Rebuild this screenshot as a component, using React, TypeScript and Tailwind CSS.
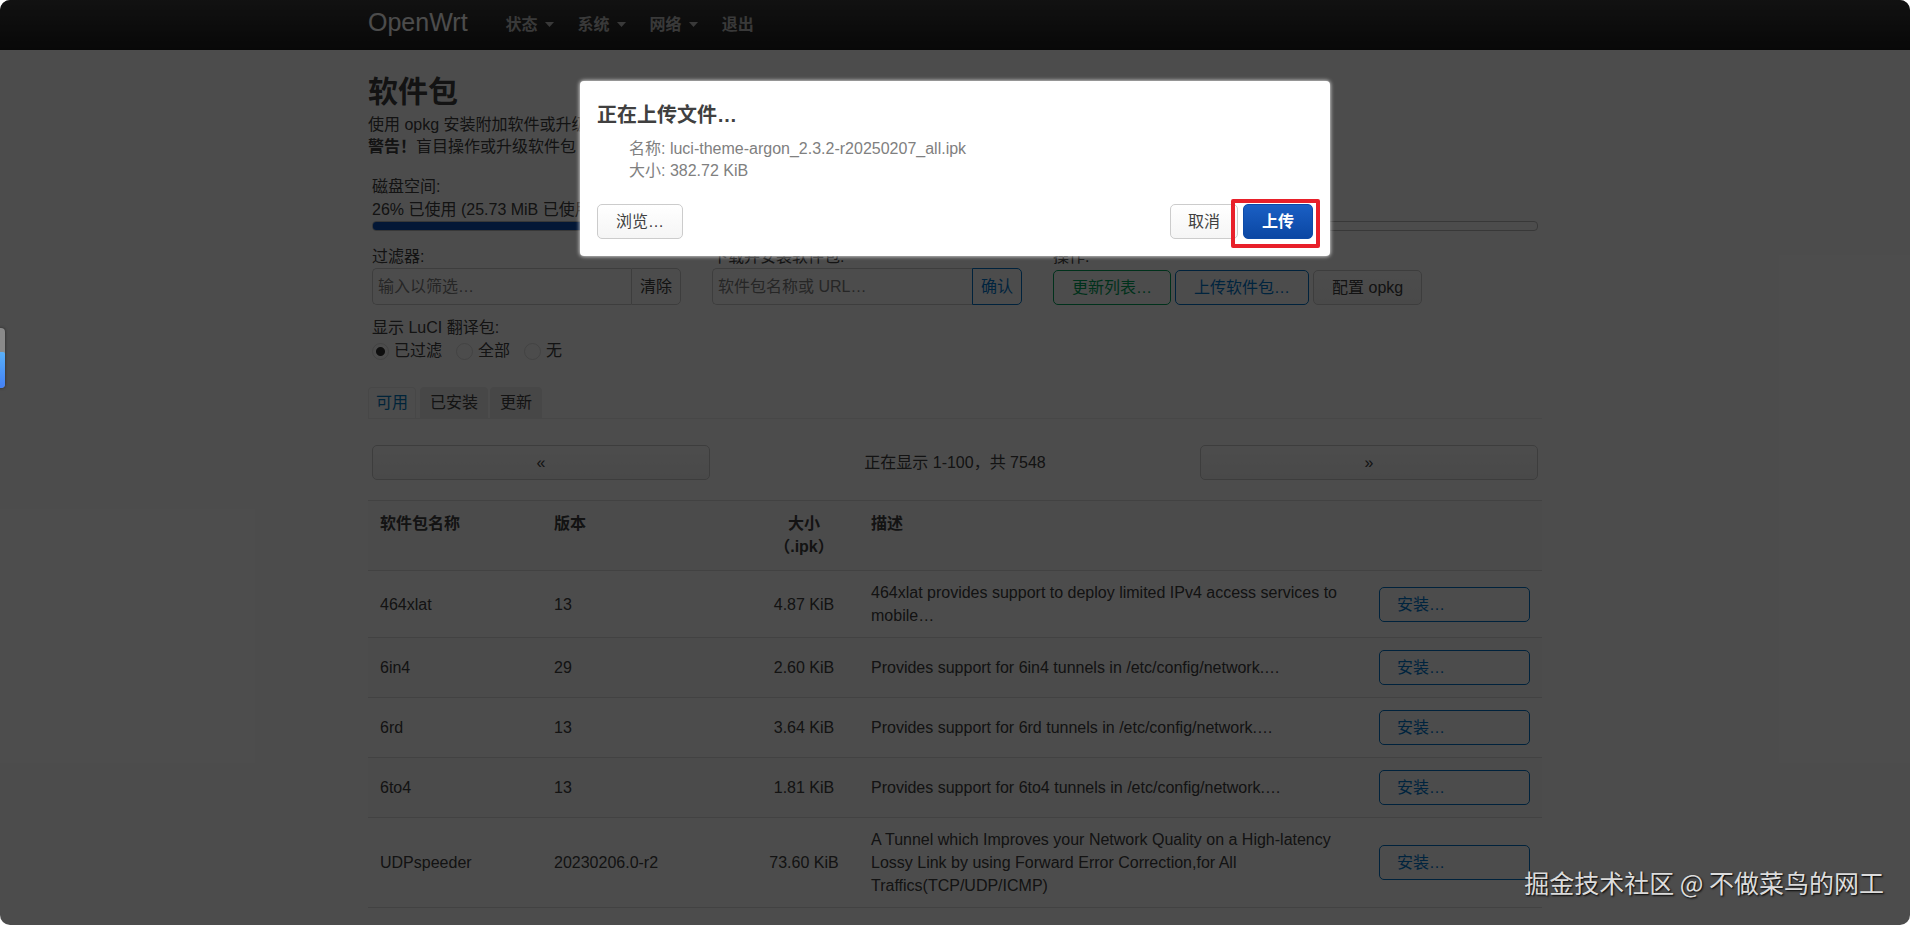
import type { ReactNode } from "react";

const packages = [
  { name: "464xlat", version: "13", size: "4.87 KiB", description: "464xlat provides support to deploy limited IPv4 access services to mobile…" },
  { name: "6in4", version: "29", size: "2.60 KiB", description: "Provides support for 6in4 tunnels in /etc/config/network.…" },
  { name: "6rd", version: "13", size: "3.64 KiB", description: "Provides support for 6rd tunnels in /etc/config/network.…" },
  { name: "6to4", version: "13", size: "1.81 KiB", description: "Provides support for 6to4 tunnels in /etc/config/network.…" },
  {
    name: "UDPspeeder",
    version: "20230206.0-r2",
    size: "73.60 KiB",
    description: "A Tunnel which Improves your Network Quality on a High-latency Lossy Link by using Forward Error Correction,for All Traffics(TCP/UDP/ICMP)",
  },
];

const tones = {
  neutral: "border-[#ccc] text-[#404040] bg-linear-to-b from-white to-[#f5f5f5]",
  action: "border-[#0074c8] text-[#0078d0] bg-white",
  positive: "border-[#00a35c] text-[#00a35c] bg-white",
  primary: "border-[#0d4ba8] text-white font-bold bg-linear-to-b from-[#1a5fc4] to-[#0b47a3]",
};

function Button({ tone = "neutral", className = "px-[17px]", children }: { tone?: keyof typeof tones; className?: string; children: ReactNode }) {
  return (
    <button type="button" className={`h-[35px] rounded-[5px] border whitespace-nowrap ${tones[tone]} ${className}`}>
      {children}
    </button>
  );
}

function NavMenu({ label }: { label: string }) {
  return (
    <button type="button" className="flex items-center gap-[7px] font-bold">
      {label}
      <svg width="9" height="5" viewBox="0 0 9 5" aria-hidden="true">
        <path d="M0 0h9L4.5 5z" fill="currentColor" />
      </svg>
    </button>
  );
}

function Header() {
  return (
    <header className="h-[50px] bg-linear-to-b from-[#3c3c3c] to-[#1c1c1c]">
      <div className="mx-auto flex h-full max-w-[1174px] items-center">
        <a href="#" className="mr-[38px] pb-1 text-[25px] text-white">OpenWrt</a>
        <nav className="flex items-center gap-6 pb-px text-[#bfbfbf]">
          <NavMenu label="状态" />
          <NavMenu label="系统" />
          <NavMenu label="网络" />
          <a href="#" className="font-bold">退出</a>
        </nav>
      </div>
    </header>
  );
}

function Radio({ id, label, defaultChecked }: { id: string; label: string; defaultChecked?: boolean }) {
  return (
    <span className="flex items-center gap-[5px]">
      <input
        type="radio"
        name="i18n"
        id={id}
        defaultChecked={defaultChecked}
        className="size-[17px] appearance-none rounded-full border border-[#ddd] checked:bg-[radial-gradient(circle,#303030_4px,transparent_5px)]"
      />
      <label htmlFor={id}>{label}</label>
    </span>
  );
}

function Controls() {
  const field = "h-[37px] min-w-0 flex-1 rounded-l-[5px] border border-r-0 border-[#ccc] px-[5px] placeholder:text-[#808080]";
  const attached = "h-[37px] rounded-r-[5px] border px-2";
  return (
    <div className="px-1">
      <div className="mt-[17px] leading-[23px]">
        <p>磁盘空间:</p>
        <p>26% 已使用 (25.73 MiB 已使用</p>
        <div className="h-[10px] overflow-hidden rounded-[4px] border border-[#bbb]">
          <div className="h-full w-[26%] bg-[#0c4fb4]" />
        </div>
      </div>
      <div className="mt-[14px] grid grid-cols-[309fr_310fr_485fr] gap-[31px]">
        <div>
          <label htmlFor="filter" className="block leading-[23px]">过滤器:</label>
          <div className="flex">
            <input id="filter" type="text" placeholder="输入以筛选…" className={field} />
            <button type="button" className={`${attached} border-[#ccc]`}>清除</button>
          </div>
        </div>
        <div>
          <label htmlFor="install" className="block leading-[23px]">下载并安装软件包:</label>
          <div className="flex">
            <input id="install" type="text" placeholder="软件包名称或 URL…" className={field} />
            <button type="button" className={`${attached} border-[#0074c8] text-[#0078d0]`}>确认</button>
          </div>
        </div>
        <div>
          <p className="leading-[23px]">操作:</p>
          <div className="mt-[2px] flex gap-1">
            <Button tone="positive" className="px-[18px]">更新列表…</Button>
            <Button tone="action" className="px-[18px]">上传软件包…</Button>
            <Button className="px-[18px]">配置 opkg</Button>
          </div>
        </div>
      </div>
      <fieldset className="mt-[11px]">
        <legend className="leading-[23px]">显示 LuCI 翻译包:</legend>
        <div className="flex h-6 items-center gap-[14px]">
          <Radio id="filtered" label="已过滤" defaultChecked />
          <Radio id="all" label="全部" />
          <Radio id="none" label="无" />
        </div>
      </fieldset>
    </div>
  );
}

function Tabs() {
  const idle = "rounded-t-[4px] bg-[#eee] px-[10px] text-[#404040]";
  return (
    <nav className="mt-6 flex h-8 gap-[2px] border-b border-[#eee]">
      <a href="#" className="mr-[2px] flex items-center rounded-t-[4px] border border-b-0 border-[#eee] px-[7px] text-[#0078c0]">可用</a>
      <a href="#" className={`flex items-center ${idle}`}>已安装</a>
      <a href="#" className={`flex items-center ${idle}`}>更新</a>
    </nav>
  );
}

function Pager() {
  return (
    <div className="mt-[26px] flex items-center justify-between px-1">
      <Button className="w-[29%]">«</Button>
      <p>正在显示 1-100，共 7548</p>
      <Button className="w-[29%]">»</Button>
    </div>
  );
}

function PackageTable() {
  const cell = "border-t border-[#ddd] px-3 py-[10px]";
  const head = "border-t border-[#ddd] px-3 pt-[11px] pb-3 align-top";
  return (
    <table className="mt-5 w-full table-fixed border-separate border-spacing-0 border-b border-[#ddd] text-left leading-[23px]">
      <colgroup>
        <col className="w-[174px]" />
        <col className="w-[207px]" />
        <col className="w-[110px]" />
        <col />
        <col className="w-[175px]" />
      </colgroup>
      <thead>
        <tr className="bg-[#fafafa]">
          <th className={head}>软件包名称</th>
          <th className={head}>版本</th>
          <th className={`${head} text-center`}>大小<br />（.ipk）</th>
          <th className={head}>描述</th>
          <th className={head} />
        </tr>
      </thead>
      <tbody>
        {packages.map((pkg) => (
          <tr key={pkg.name} className="even:bg-[#fafafa]">
            <td className={cell}>{pkg.name}</td>
            <td className={cell}>{pkg.version}</td>
            <td className={`${cell} text-center`}>{pkg.size}</td>
            <td className={cell}>{pkg.description}</td>
            <td className="border-t border-[#ddd] px-3 py-3">
              <Button tone="action" className="block w-full px-[17px] text-left">安装…</Button>
            </td>
          </tr>
        ))}
      </tbody>
    </table>
  );
}

function UploadDialog() {
  return (
    <div role="dialog" aria-modal="true" aria-labelledby="upload-title" className="w-[750px] rounded-[4px] bg-white px-[17px] pt-5 pb-[17px] shadow-[0_0_4px_#fff]">
      <h4 id="upload-title" className="text-[20px] leading-7 font-bold">正在上传文件…</h4>
      <ul className="mt-[9px] pl-8 leading-[22px] text-[#808080]">
        <li>名称: luci-theme-argon_2.3.2-r20250207_all.ipk</li>
        <li>大小: 382.72 KiB</li>
      </ul>
      <div className="mt-[22px] flex items-center gap-[5px]">
        <Button className="mr-auto px-[18px]">浏览…</Button>
        <Button>取消</Button>
        <span className="relative">
          <Button tone="primary" className="px-[18px]">上传</Button>
          <span className="pointer-events-none absolute -top-[5px] -right-[7px] -bottom-[9px] -left-[12px] rounded-[2px] border-4 border-[#e8202a]" />
        </span>
      </div>
    </div>
  );
}

export default function App() {
  return (
    <div className="relative min-h-screen overflow-hidden rounded-[10px] bg-white font-['Liberation_Sans','Noto_Sans_CJK_SC',sans-serif] text-[16px] text-[#404040]">
      <Header />
      <main className="mx-auto max-w-[1174px] pt-6">
        <h2 className="text-[30px] leading-9 font-bold">软件包</h2>
        <div className="mt-1 leading-[22px]">
          <p>使用 opkg 安装附加软件或升级</p>
          <p><strong>警告！</strong>盲目操作或升级软件包</p>
        </div>
        <Controls />
        <Tabs />
        <Pager />
        <PackageTable />
      </main>
      <div className="absolute inset-0 flex items-start justify-center bg-black/70 pt-[81px]">
        <UploadDialog />
      </div>
      <div className="absolute top-[328px] left-0 flex h-[60px] w-[5px] flex-col overflow-hidden rounded-r-[4px] bg-[#8a8a8a] shadow-[0_0_3px_#222]">
        <div className="mt-6 flex-1 rounded-tr-[2px] bg-linear-to-b from-[#5ab0f8] to-[#4480f5]" />
      </div>
      <p className="absolute right-[26px] bottom-[25px] font-['Noto_Sans_CJK_SC',sans-serif] text-[25px] leading-9 text-[#dcdcdc] [text-shadow:1px_1px_2px_#000]">
        掘金技术社区 @ 不做菜鸟的网工
      </p>
    </div>
  );
}
